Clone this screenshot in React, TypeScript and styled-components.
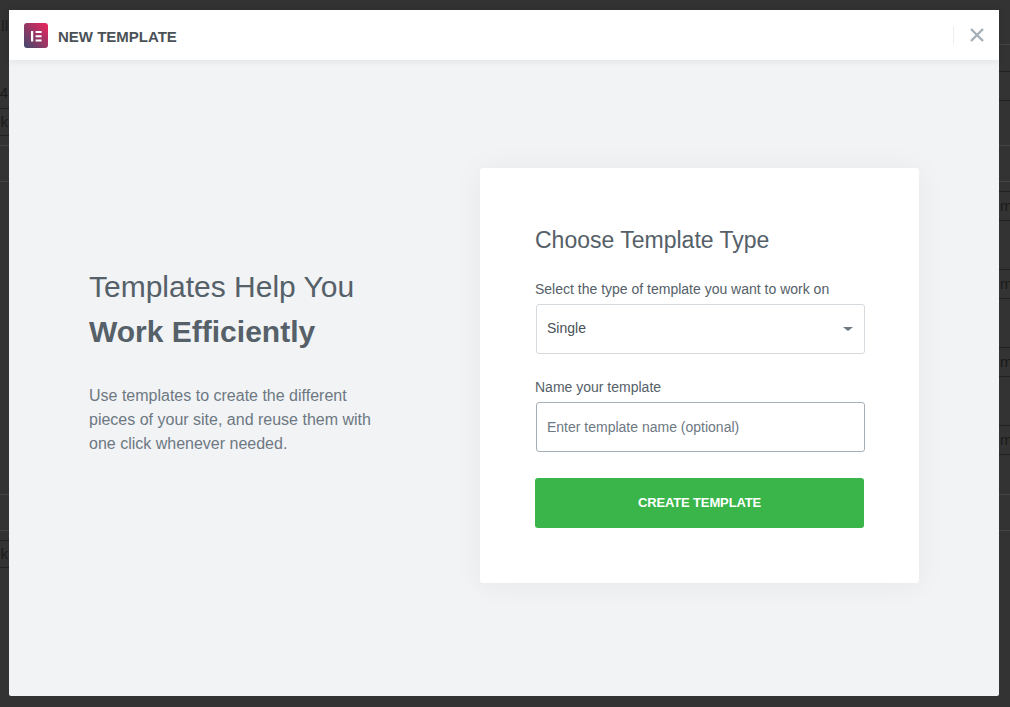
import React from 'react'
import styled, { createGlobalStyle } from 'styled-components'

const GlobalStyle = createGlobalStyle`
  html, body {
    margin: 0;
    padding: 0;
    background: #333333;
  }

  * {
    box-sizing: border-box;
  }
`

const Page = styled.div`
  position: relative;
  display: flex;
  justify-content: space-between;
  width: 1010px;
  height: 707px;
  overflow: hidden;
  background: #333333;
  font-family: 'Liberation Sans', Arial, sans-serif;
`

const Strip = styled.div<{ $side: 'left' | 'right' }>`
  display: flex;
  flex-direction: column;
  width: ${(p) => (p.$side === 'left' ? '9px' : '11px')};
  overflow: hidden;
  text-align: ${(p) => (p.$side === 'left' ? 'right' : 'left')};
`

const StripRow = styled.div<{ $height: number; $line?: 'dark' | 'faint' }>`
  display: flex;
  flex: none;
  align-items: center;
  height: ${(p) => p.$height}px;
  border-bottom: 1px solid
    ${(p) => (p.$line === 'dark' ? '#1f2124' : p.$line === 'faint' ? '#444444' : 'transparent')};
  font-size: 15px;
  color: #1a1a1a;
`

const RowText = styled.span<{ $end?: boolean }>`
  display: block;
  width: 100%;
  margin-top: -2px;
  white-space: nowrap;
  direction: ${(p) => (p.$end ? 'rtl' : 'ltr')};
  padding-left: ${(p) => (p.$end ? '0' : '1px')};
  padding-right: ${(p) => (p.$end ? '1px' : '0')};
`

const Modal = styled.div`
  position: absolute;
  top: 10px;
  left: 9px;
  display: flex;
  flex-direction: column;
  width: 990px;
  height: 686px;
  border-radius: 2px;
  background: #f1f3f5;
`

const Header = styled.header`
  display: flex;
  flex: none;
  align-items: center;
  height: 50px;
  padding: 0 15px;
  background: #ffffff;
  box-shadow: 0 0 8px rgba(0, 0, 0, 0.1);
`

const Logo = styled.svg`
  flex: none;
  width: 24px;
  height: 25px;
`

const Title = styled.h1`
  margin: 2px 0 0 10px;
  font-size: 15px;
  font-weight: 700;
  color: #495157;
`

const CloseArea = styled.div`
  display: flex;
  align-items: center;
  height: 18px;
  margin-left: auto;
  padding-left: 16px;
  border-left: 1px solid #eceeef;
`

const CloseIcon = styled.svg`
  display: block;
  width: 14px;
  height: 14px;
  stroke: #a4afb7;
  stroke-width: 2.4;
`

const Body = styled.main`
  display: flex;
  flex: 1;
  align-items: center;
  padding: 0 80px 6px;
`

const Intro = styled.section`
  width: 300px;
  margin-bottom: 30px;
  color: #556068;
`

const IntroHeading = styled.h2`
  margin: 0;
  font-size: 30px;
  font-weight: 400;
  line-height: 45px;
`

const IntroStrong = styled.strong`
  display: block;
  font-weight: 700;
`

const IntroCopy = styled.p`
  margin: 30px 0 0;
  font-size: 16px;
  line-height: 24px;
  color: #6d7882;
`

const Card = styled.form`
  display: flex;
  flex-direction: column;
  width: 439px;
  height: 415px;
  margin-left: auto;
  padding: 55px;
  border-radius: 3px;
  background: #ffffff;
  box-shadow: 0 2px 30px rgba(0, 0, 0, 0.05);
`

const CardTitle = styled.h3`
  margin: 0 0 24px;
  font-size: 23px;
  font-weight: 400;
  line-height: 34px;
  color: #556068;
`

const Field = styled.label`
  display: block;
  margin-bottom: 25px;
  font-size: 14px;
  line-height: 17px;
  color: #556068;
`

const FieldLabel = styled.span`
  display: block;
  margin-bottom: 6px;
`

const SelectWrap = styled.div`
  position: relative;
  width: 329px;
  margin-left: 1px;
`

const Caret = styled.span`
  position: absolute;
  top: 23px;
  right: 12px;
  width: 0;
  height: 0;
  border-top: 4px solid #6d7882;
  border-left: 5px solid transparent;
  border-right: 5px solid transparent;
`

const Select = styled.select`
  display: block;
  width: 100%;
  height: 50px;
  padding: 0 10px 2px;
  border: 1px solid #d5dadf;
  border-radius: 3px;
  outline: none;
  appearance: none;
  background: #ffffff;
  font-family: inherit;
  font-size: 14px;
  color: #495157;
`

const Input = styled.input`
  display: block;
  width: 329px;
  height: 50px;
  margin-left: 1px;
  padding: 0 10px;
  border: 1px solid #a4afb7;
  border-radius: 3px;
  outline: none;
  background: #ffffff;
  font-family: inherit;
  font-size: 14px;
  color: #495157;

  &::placeholder {
    color: #6d7882;
    opacity: 1;
  }
`

const Submit = styled.button`
  height: 50px;
  margin-top: 1px;
  border: 0;
  border-radius: 3px;
  background: #39b54a;
  font-family: inherit;
  font-size: 13px;
  font-weight: 700;
  letter-spacing: -0.13px;
  color: #ffffff;
`

const App: React.FunctionComponent = () => {
  return (
    <Page>
      <GlobalStyle />

      <Strip $side="left">
        <StripRow $height={54}><RowText $end>ll</RowText></StripRow>
        <StripRow $height={24} />
        <StripRow $height={31} $line="dark"><RowText $end>4</RowText></StripRow>
        <StripRow $height={27} $line="dark"><RowText $end>k</RowText></StripRow>
        <StripRow $height={10} $line="faint" />
        <StripRow $height={36} $line="faint" />
        <StripRow $height={313} $line="faint" />
        <StripRow $height={36} $line="faint" />
        <StripRow $height={10} $line="dark" />
        <StripRow $height={27} $line="dark"><RowText $end>k</RowText></StripRow>
      </Strip>

      <Strip $side="right">
        <StripRow $height={45} $line="faint" />
        <StripRow $height={27} $line="dark" />
        <StripRow $height={29} $line="dark" />
        <StripRow $height={45} $line="faint" />
        <StripRow $height={36} $line="faint" />
        <StripRow $height={10} $line="dark" />
        <StripRow $height={29} $line="dark"><RowText>m</RowText></StripRow>
        <StripRow $height={49} $line="dark" />
        <StripRow $height={29} $line="dark"><RowText>m</RowText></StripRow>
        <StripRow $height={49} $line="dark" />
        <StripRow $height={29} $line="dark"><RowText>m</RowText></StripRow>
        <StripRow $height={49} $line="dark" />
        <StripRow $height={29} $line="dark"><RowText>m</RowText></StripRow>
        <StripRow $height={40} $line="faint" />
        <StripRow $height={36} $line="faint" />
      </Strip>

      <Modal>
        <Header>
          <Logo viewBox="0 0 24 25" aria-hidden="true">
            <defs>
              <linearGradient id="logo-fill" x1="0" y1="1" x2="1" y2="0">
                <stop offset="0" stopColor="#3f4a6e" />
                <stop offset="1" stopColor="#f0245c" />
              </linearGradient>
            </defs>
            <rect width="24" height="25" rx="3" fill="url(#logo-fill)" />
            <path fill="#ffffff" d="M7 8h2.2v10.5H7zM11.6 8h6v2h-6zM11.6 12.2h6v2h-6zM11.6 16.5h6v2h-6z" />
          </Logo>
          <Title>NEW TEMPLATE</Title>
          <CloseArea>
            <CloseIcon viewBox="0 0 14 14" aria-hidden="true">
              <path d="M1 1l12 12M13 1L1 13" />
            </CloseIcon>
          </CloseArea>
        </Header>

        <Body>
          <Intro>
            <IntroHeading>
              Templates Help You
              <IntroStrong>Work Efficiently</IntroStrong>
            </IntroHeading>
            <IntroCopy>
              Use templates to create the different pieces of your site, and reuse them with one click whenever needed.
            </IntroCopy>
          </Intro>

          <Card>
            <CardTitle>Choose Template Type</CardTitle>
            <Field>
              <FieldLabel>Select the type of template you want to work on</FieldLabel>
              <SelectWrap>
                <Select defaultValue="single">
                  <option value="single">Single</option>
                </Select>
                <Caret />
              </SelectWrap>
            </Field>
            <Field>
              <FieldLabel>Name your template</FieldLabel>
              <Input placeholder="Enter template name (optional)" />
            </Field>
            <Submit type="button">CREATE TEMPLATE</Submit>
          </Card>
        </Body>
      </Modal>
    </Page>
  )
}

export default App
